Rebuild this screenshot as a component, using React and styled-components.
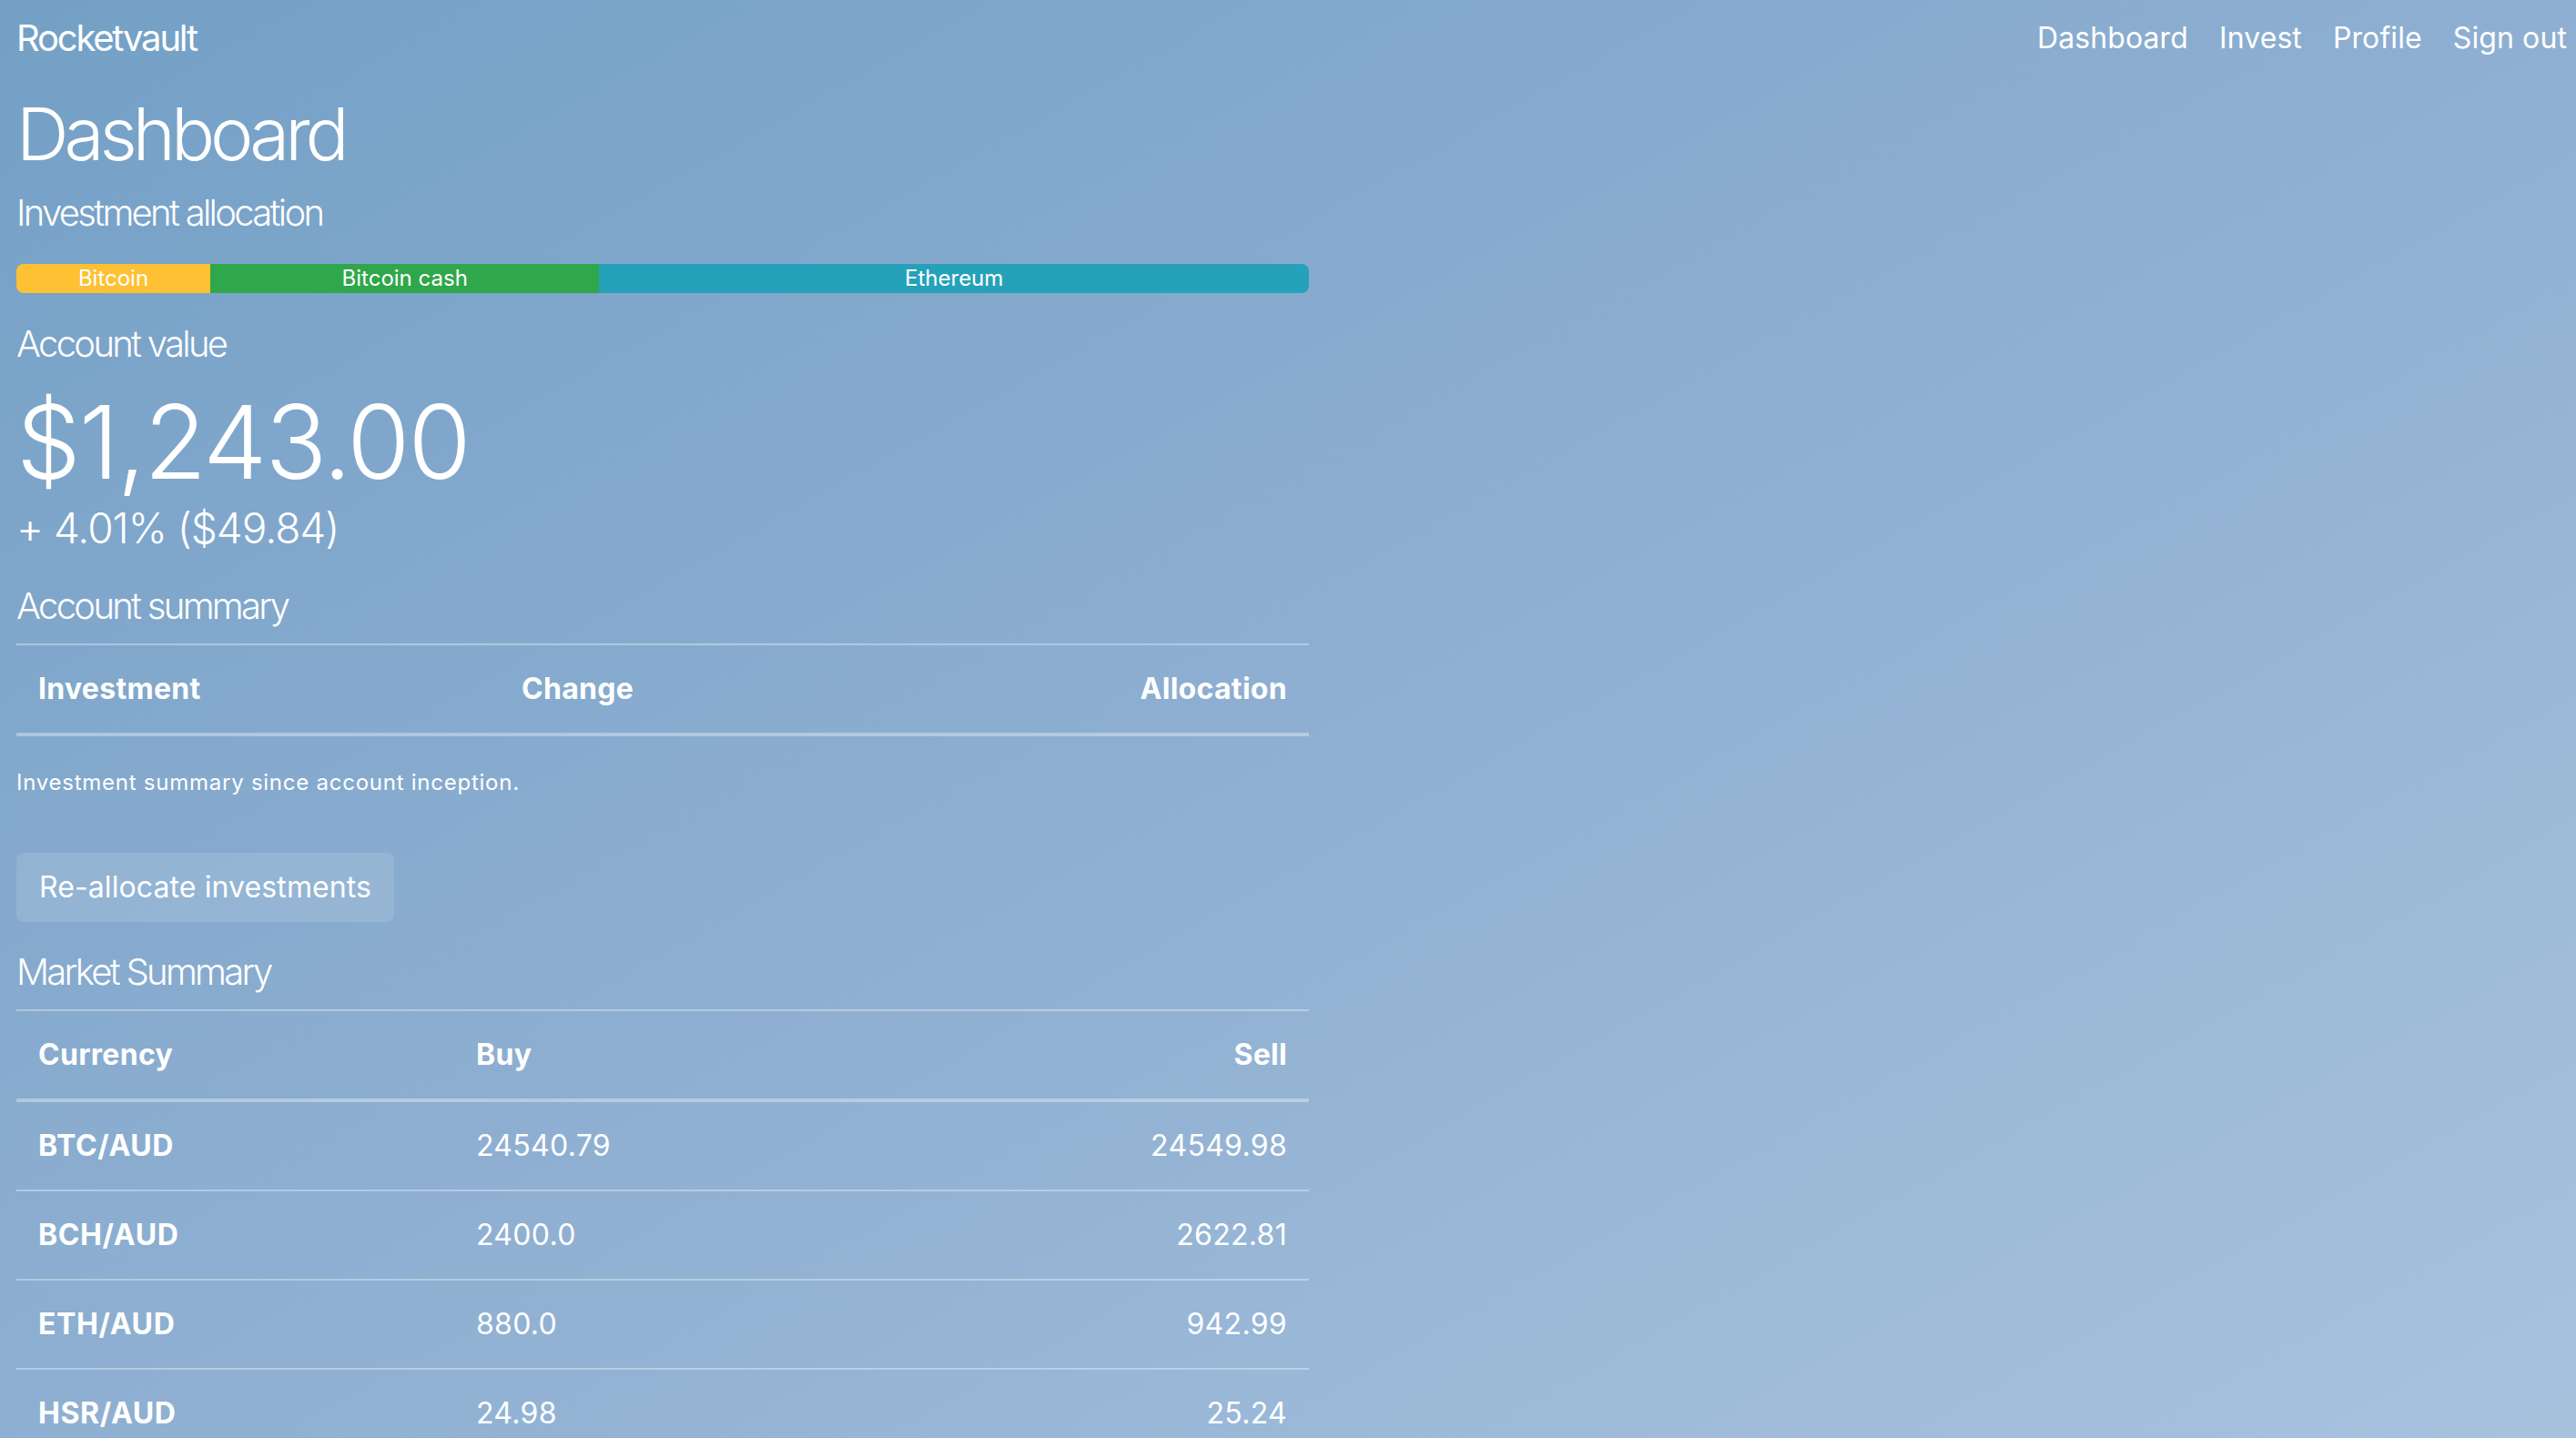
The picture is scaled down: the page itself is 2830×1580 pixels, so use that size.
import React from "react";
import styled, { createGlobalStyle } from "styled-components";

const GlobalStyle = createGlobalStyle`
  html, body {
    margin: 0;
    padding: 0;
  }
  body {
    min-height: 100vh;
    background: linear-gradient(to bottom right, #74a0c6 0%, #8eafd1 50%, #a8c2de 100%);
    background-attachment: fixed;
    font-family: Inter, "Noto Sans", "Liberation Sans", sans-serif;
    color: #ffffff;
    overflow: hidden;
  }
  * { box-sizing: border-box; }
`;

const Page = styled.div`
  min-height: 1580px;
  display: flex;
  flex-direction: column;
`;

const Navbar = styled.nav`
  display: flex;
  align-items: center;
  justify-content: space-between;
  padding: 12px 10px 0 18px;
`;

const Brand = styled.a`
  font-size: 40px;
  line-height: 60px;
  font-weight: 400;
  letter-spacing: -2.2px;
  color: #fff;
  text-decoration: none;
`;

const NavList = styled.div`
  display: flex;
  align-items: center;
  gap: 34px;
`;

const NavLink = styled.a`
  font-size: 32px;
  line-height: 48px;
  font-weight: 400;
  letter-spacing: 0.1px;
  color: #fff;
  text-decoration: none;
`;

const Main = styled.main`
  width: 1420px;
  margin-left: 18px;
  display: flex;
  flex-direction: column;
`;

const Title = styled.h1`
  margin: 27px 0 0;
  font-size: 80px;
  line-height: 96px;
  font-weight: 300;
  letter-spacing: -5px;
`;

const Subheading = styled.h5`
  margin: ${(p) => p.$mt}px 0 0;
  font-size: 40px;
  line-height: 48px;
  font-weight: 300;
  letter-spacing: -2.7px;
`;

const AllocationBar = styled.div`
  margin-top: 32.5px;
  height: 32px;
  display: flex;
  border-radius: 8px;
  overflow: hidden;
`;

const Segment = styled.div`
  flex: 0 0 ${(p) => p.$share}%;
  background: ${(p) => p.$color};
  color: #fff;
  font-size: 24px;
  line-height: 32px;
  text-align: center;
  white-space: nowrap;
`;

const BigValue = styled.div`
  margin-top: 16.5px;
  font-size: 112px;
  line-height: 134.4px;
  font-weight: 300;
  letter-spacing: -2.1px;
`;

const Change = styled.div`
  font-size: 46px;
  line-height: 57.6px;
  font-weight: 300;
  letter-spacing: -1px;
`;

const Table = styled.table`
  margin-top: 16.5px;
  width: 100%;
  border-collapse: collapse;
  table-layout: fixed;
  color: #fff;
`;

const Th = styled.th`
  padding: 24px;
  font-size: 32px;
  line-height: 48px;
  font-weight: 700;
  letter-spacing: 0.3px;
  text-align: ${(p) => p.$align || "left"};
  border-top: 2px solid rgba(255, 255, 255, 0.35);
  border-bottom: 4px solid rgba(255, 255, 255, 0.35);
`;

const Cell = styled.td`
  padding: 24px;
  font-size: 32px;
  line-height: 48px;
  font-weight: ${(p) => (p.$bold ? 700 : 400)};
  text-align: ${(p) => p.$align || "left"};
  letter-spacing: ${(p) => (p.$bold ? "0.6px" : "0.3px")};
  border-top: 2px solid rgba(255, 255, 255, 0.35);
`;

const Caption = styled.caption`
  caption-side: bottom;
  text-align: left;
  padding: 33px 0 0;
  font-size: 24px;
  line-height: 36px;
  font-weight: 400;
  letter-spacing: 0.75px;
  color: #fff;
`;

const Button = styled.button`
  align-self: flex-start;
  margin-top: 59px;
  padding: 13px 24px;
  border: 1px solid transparent;
  border-radius: 8px;
  background: rgba(255, 255, 255, 0.12);
  color: #fff;
  font-family: inherit;
  font-size: 32px;
  line-height: 48px;
  font-weight: 400;
  letter-spacing: 0.1px;
  cursor: pointer;
`;

const allocation = [
  { name: "Bitcoin", share: 15, color: "#fdc133" },
  { name: "Bitcoin cash", share: 30.1, color: "#2fa74b" },
  { name: "Ethereum", share: 54.9, color: "#25a2b9" },
];

const markets = [
  { pair: "BTC/AUD", buy: "24540.79", sell: "24549.98" },
  { pair: "BCH/AUD", buy: "2400.0", sell: "2622.81" },
  { pair: "ETH/AUD", buy: "880.0", sell: "942.99" },
  { pair: "HSR/AUD", buy: "24.98", sell: "25.24" },
];

export default function App() {
  return (
    <Page>
      <GlobalStyle />
      <Navbar>
        <Brand href="#">Rocketvault</Brand>
        <NavList>
          <NavLink href="#">Dashboard</NavLink>
          <NavLink href="#">Invest</NavLink>
          <NavLink href="#">Profile</NavLink>
          <NavLink href="#">Sign out</NavLink>
        </NavList>
      </Navbar>
      <Main>
        <Title>Dashboard</Title>
        <Subheading $mt={14.5}>Investment allocation</Subheading>
        <AllocationBar>
          {allocation.map((a) => (
            <Segment key={a.name} $share={a.share} $color={a.color}>
              {a.name}
            </Segment>
          ))}
        </AllocationBar>
        <Subheading $mt={31.5}>Account value</Subheading>
        <BigValue>$1,243.00</BigValue>
        <Change>+ 4.01% ($49.84)</Change>
        <Subheading $mt={32}>Account summary</Subheading>
        <Table>
          <colgroup>
            <col style={{ width: "531px" }} />
            <col />
            <col />
          </colgroup>
          <Caption>Investment summary since account inception.</Caption>
          <thead>
            <tr>
              <Th>Investment</Th>
              <Th>Change</Th>
              <Th $align="right">Allocation</Th>
            </tr>
          </thead>
        </Table>
        <Button>Re-allocate investments</Button>
        <Subheading $mt={31.5}>Market Summary</Subheading>
        <Table>
          <colgroup>
            <col style={{ width: "481px" }} />
            <col />
            <col />
          </colgroup>
          <thead>
            <tr>
              <Th>Currency</Th>
              <Th>Buy</Th>
              <Th $align="right">Sell</Th>
            </tr>
          </thead>
          <tbody>
            {markets.map((m) => (
              <tr key={m.pair}>
                <Cell as="th" scope="row" $bold>
                  {m.pair}
                </Cell>
                <Cell>{m.buy}</Cell>
                <Cell $align="right">{m.sell}</Cell>
              </tr>
            ))}
          </tbody>
        </Table>
      </Main>
    </Page>
  );
}
